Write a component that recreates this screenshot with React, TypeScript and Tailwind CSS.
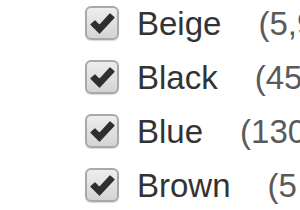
import React from "react";

const items = [
  { name: "Beige", count: "(5,9" },
  { name: "Black", count: "(45" },
  { name: "Blue", count: "(130" },
  { name: "Brown", count: "(5" },
];

function Check() {
  return (
    <div className="w-[34px] h-[34px] shrink-0 rounded-[6px] border-2 border-[#a9a9a9] bg-gradient-to-b from-[#eeeeee] to-[#d4d4d4] shadow-[0_1px_1px_rgba(0,0,0,0.15)] flex items-center justify-center">
      <svg width="25" height="22" viewBox="0 0 25 22">
        <path d="M1 12.5 L5 9 L9.5 13.5 L20 2 L24 5.5 L9.5 21 Z" fill="#2f2f2f" stroke="#2f2f2f" strokeWidth="1.2" strokeLinejoin="round" />
      </svg>
    </div>
  );
}

export default function App() {
  return (
    <div className="w-[300px] h-[210px] bg-white overflow-hidden pl-[85px] font-['Liberation_Sans',Arial,sans-serif]">
      <div className="-mt-[4px]">
        {items.map((it) => (
          <div key={it.name} className="flex items-center h-[54px] whitespace-nowrap">
            <Check />
            <span className="ml-[18px] text-[33px] leading-none text-[#333]">{it.name}</span>
            <span className="ml-[37px] text-[33px] leading-none text-[#5a5a5a]">{it.count}</span>
          </div>
        ))}
      </div>
    </div>
  );
}
